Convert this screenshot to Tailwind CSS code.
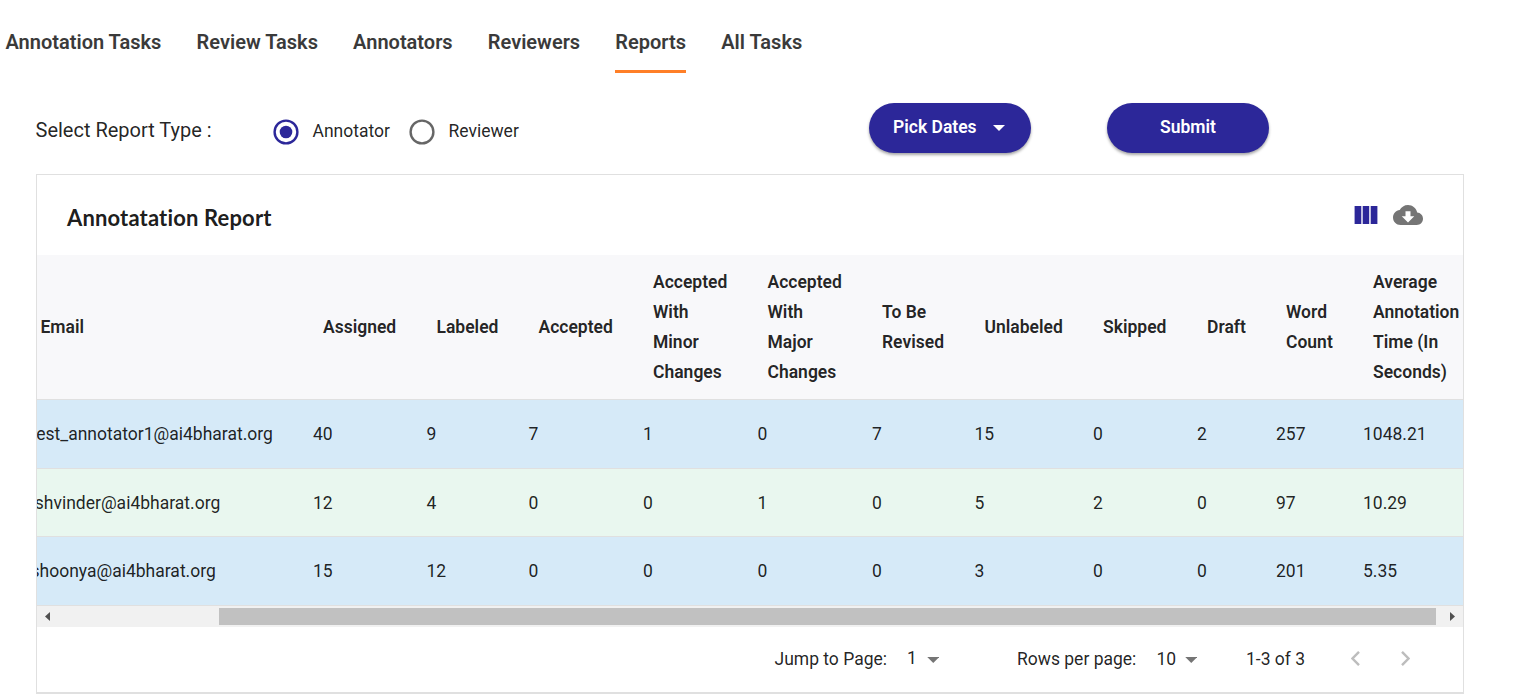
<!DOCTYPE html>
<html lang="en">
<head>
<meta charset="utf-8">
<title>Reports</title>
<script src="https://cdn.jsdelivr.net/npm/@tailwindcss/browser@4"></script>
</head>
<body class="bg-white font-['Roboto',sans-serif] text-[17.5px] text-black/87 h-[695px] overflow-hidden">
<nav class="flex h-[73px] pl-[5.5px] gap-[35.2px] text-[20px] font-semibold text-[#3a3a3a] leading-[30px] whitespace-nowrap">
  <a class="pt-[27px]">Annotation Tasks</a>
  <a class="pt-[27px]">Review Tasks</a>
  <a class="pt-[27px]">Annotators</a>
  <a class="pt-[27px]">Reviewers</a>
  <a class="pt-[27px] border-b-3 border-[#ff7f27]">Reports</a>
  <a class="pt-[27px]">All Tasks</a>
</nav>
<section class="flex h-[101px] pl-[35.500px] pt-[30px] whitespace-nowrap">
  <div class="w-[237.5px] pt-[12px] text-[20px] leading-[30px]">Select Report Type :</div>
  <label class="flex w-[136px] pt-[16px] leading-[24px]">
    <svg class="w-[26px] h-[26px] mr-[13.5px]" viewBox="0 0 26 26" fill="none"><circle cx="13" cy="13" r="11.4" stroke="#2c2799" stroke-width="2.4"/><circle cx="13" cy="13" r="6.3" fill="#2c2799"/></svg>
    <span>Annotator</span>
  </label>
  <label class="flex w-[460px] pt-[16px] leading-[24px]">
    <svg class="w-[26px] h-[26px] mr-[13.5px]" viewBox="0 0 26 26" fill="none"><circle cx="13" cy="13" r="11.4" stroke="#666" stroke-width="2.4"/></svg>
    <span>Reviewer</span>
  </label>
  <button class="flex w-[162px] h-[50px] rounded-full bg-[#2c2799] text-white font-semibold pl-[24px] pt-[12px] leading-[24px] shadow-[0_2px_3px_rgba(0,0,0,0.35)]">
    <span class="w-[99.5px] text-left">Pick Dates</span>
    <svg class="w-[12px] h-[6px] mt-[10px]" viewBox="0 0 12 6"><path d="M0 0h12L6 6z" fill="#fff"/></svg>
  </button>
  <button class="w-[162px] h-[50px] ml-[76px] rounded-full bg-[#2c2799] text-white font-semibold pb-[2px] leading-[24px] shadow-[0_2px_3px_rgba(0,0,0,0.35)]">Submit</button>
</section>
<main class="ml-[36px] w-[1428px] h-[520px] border border-b-2 border-[#e0e0e0] overflow-hidden">
  <header class="flex h-[80px] pl-[30px] pr-[40px] justify-between">
    <h1 class="font-['Lato',sans-serif] font-bold text-[22px] leading-[30px] pt-[28px] tracking-[0.15px] text-black/90 [font-variant-ligatures:none]">Annotatation Report</h1>
    <div class="flex gap-[15px] pt-[30px]">
      <svg class="w-[24px] h-[20px]" viewBox="0 0 24 20" fill="#2c2799"><path d="M.6 1h6.7v18H.6zM8.700 1h6.500v18H8.700zM16.700 1h6.700v18h-6.700z"/></svg>
      <svg class="w-[30px] h-[20px]" viewBox="0 4 24 16" fill="#757575"><path d="M19.35 10.04C18.67 6.59 15.64 4 12 4 9.11 4 6.6 5.64 5.35 8.04 2.34 8.36 0 10.91 0 14c0 3.31 2.69 6 6 6h13c2.76 0 5-2.24 5-5 0-2.64-2.05-4.78-4.65-4.96zM17 13l-5 5-5-5h3V9h4v4h3z"/></svg>
    </div>
  </header>
  <div class="overflow-hidden">
    <div class="-ml-[26.5px] w-[1453px]">
      <div class="grid grid-cols-[282.5px_113.5px_102px_114.5px_114.5px_114.5px_102.5px_118.5px_104px_79px_87px_120px] h-[145px] bg-[#f8f8fa] border-b border-[#e0e0e0] items-center font-semibold leading-[30px] *:pl-[30px]">
        <div>Email</div><div>Assigned</div><div>Labeled</div><div>Accepted</div><div>Accepted<br>With<br>Minor<br>Changes</div><div>Accepted<br>With<br>Major<br>Changes</div><div>To Be<br>Revised</div><div>Unlabeled</div><div>Skipped</div><div>Draft</div><div>Word<br>Count</div><div>Average<br>Annotation<br>Time (In<br>Seconds)</div>
      </div>
      <div class="grid grid-cols-[282.5px_113.5px_102px_114.5px_114.5px_114.5px_102.5px_118.5px_104px_79px_87px_120px] h-[69px] bg-[#d6eaf8] border-b border-[#e0e0e0] items-center *:pl-[20px]">
        <div>test_annotator1@ai4bharat.org</div><div>40</div><div>9</div><div>7</div><div>1</div><div>0</div><div>7</div><div>15</div><div>0</div><div>2</div><div>257</div><div>1048.21</div>
      </div>
      <div class="grid grid-cols-[282.5px_113.5px_102px_114.5px_114.5px_114.5px_102.5px_118.5px_104px_79px_87px_120px] h-[68px] pt-[2px] bg-[#e9f7ef] border-b border-[#e0e0e0] items-center *:pl-[20px]">
        <div>ishvinder@ai4bharat.org</div><div>12</div><div>4</div><div>0</div><div>0</div><div>1</div><div>0</div><div>5</div><div>2</div><div>0</div><div>97</div><div>10.29</div>
      </div>
      <div class="grid grid-cols-[282.5px_113.5px_102px_114.5px_114.5px_114.5px_102.5px_118.5px_104px_79px_87px_120px] h-[69px] bg-[#d6eaf8] border-b border-[#e0e0e0] items-center *:pl-[20px]">
        <div>shoonya@ai4bharat.org</div><div>15</div><div>12</div><div>0</div><div>0</div><div>0</div><div>0</div><div>3</div><div>0</div><div>0</div><div>201</div><div>5.35</div>
      </div>
    </div>
  </div>
  <div class="flex h-[21px] bg-[#f1f1f1] items-center pl-[8px] pr-[8px]">
    <svg class="w-[5px] h-[9px]" viewBox="0 0 5 9"><path d="M5 0v9L0 4.5z" fill="#505050"/></svg>
    <div class="w-[1217px] h-[17px] ml-[169px] bg-[#c1c1c1]"></div>
    <svg class="w-[5px] h-[9px] ml-[14px]" viewBox="0 0 5 9"><path d="M0 0v9l5-4.5z" fill="#505050"/></svg>
  </div>
  <footer class="flex h-[65px] items-center pl-[737.5px] whitespace-nowrap">
    <span class="w-[132.5px]">Jump to Page:</span>
    <span class="w-[19.5px] pb-[2px]">1</span>
    <svg class="w-[12.5px] h-[6px]" viewBox="0 0 12 6"><path d="M0 0h12L6 6z" fill="#757575"/></svg>
    <span class="w-[139.5px] ml-[78px]">Rows per page:</span>
    <span class="w-[28px]">10</span>
    <svg class="w-[12.5px] h-[6px]" viewBox="0 0 12 6"><path d="M0 0h12L6 6z" fill="#757575"/></svg>
    <span class="w-[104.5px] ml-[49px]">1-3 of 3</span>
    <svg class="w-[9px] h-[15px] -mt-[2px]" viewBox="0 0 9 15" fill="none" stroke="#bdbdbd" stroke-width="2.4"><path d="M8 .8L1.5 7.5 8 14.2"/></svg>
    <svg class="w-[9px] h-[15px] ml-[41px] -mt-[2px]" viewBox="0 0 9 15" fill="none" stroke="#bdbdbd" stroke-width="2.4"><path d="M1 .8l6.500 6.700L1 14.200"/></svg>
  </footer>
</main>
</body>
</html>
